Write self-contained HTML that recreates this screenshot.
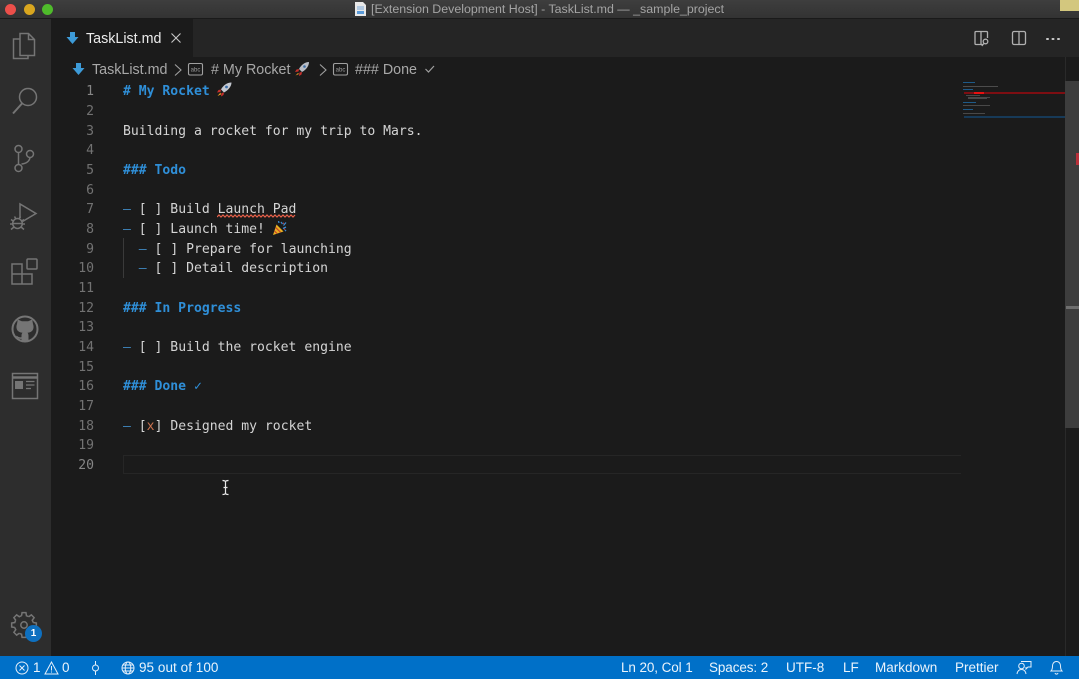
<!DOCTYPE html>
<html><head><meta charset="utf-8">
<style>
html,body{margin:0;padding:0;background:#1b1b1b;}
#r{position:relative;width:1079px;height:679px;overflow:hidden;background:#1b1b1b;font-family:"Liberation Sans",sans-serif;}
.a{position:absolute;}
.t{position:absolute;white-space:pre;}
.ln{position:absolute;width:30px;left:64px;text-align:right;font:13.1px/20px "DejaVu Sans Mono",monospace;color:#727272;}
.c{position:absolute;left:123px;white-space:pre;font:13.1px/20px "DejaVu Sans Mono",monospace;color:#d4d4d4;}
.h{color:#2f8fd8;font-weight:bold;}
.d{color:#3f86bd;}
.sb{position:absolute;top:660px;white-space:pre;font-size:13.5px;line-height:16px;color:#eaf3fb;}
.m{position:absolute;height:1px;}
</style></head><body>
<div id="r">
<!-- title bar -->
<div class="a" style="left:0;top:0;width:1079px;height:18px;background:linear-gradient(#3e3e3e,#333);border-bottom:1px solid #1a1a1a;"></div>
<div class="a" style="left:5px;top:4px;width:11px;height:11px;border-radius:50%;background:#ec4f4a;"></div>
<div class="a" style="left:23.5px;top:4px;width:11px;height:11px;border-radius:50%;background:#d9a61f;"></div>
<div class="a" style="left:42px;top:4px;width:11px;height:11px;border-radius:50%;background:#4fbb2b;"></div>
<svg class="a" style="left:354px;top:1px" width="13" height="16" viewBox="0 0 13 16"><path d="M1 1h8l3 3v11H1z" fill="#e8e8e8"/><path d="M3 6h7M3 8h7" stroke="#7aa7d8" stroke-width="1"/><path d="M3 10h7v3H3z" fill="#5a9ad8"/></svg>
<div class="t" style="left:371px;top:1px;font-size:12.4px;line-height:17px;color:#a4a4a4;">[Extension Development Host] - TaskList.md — _sample_project</div>
<div class="a" style="left:1060px;top:0;width:19px;height:11px;background:#d3c77e;"></div>

<!-- activity bar -->
<div class="a" style="left:0;top:19px;width:51px;height:637px;background:#2d2d2d;"></div>
<svg class="a" style="left:0;top:19px" width="51" height="637" viewBox="0 0 51 637" fill="none" stroke="#757575" stroke-width="1.500">
 <!-- files -->
 <path d="M20 14.500h8.500l6 6v16h-14.500z M28.500 14.500v6h6"/>
 <path d="M20 20h-6.500v19.500h14.500v-3.500"/>
 <!-- search -->
 <circle cx="28" cy="78" r="8.500"/><path d="M22 84.500l-9 10" stroke-width="2"/>
 <!-- scm -->
 <circle cx="18.500" cy="130" r="3.500"/><circle cx="18.500" cy="149" r="3.500"/><circle cx="30" cy="135" r="3.500"/>
 <path d="M18.500 133.500v12M21.500 145c5-.5 8-3 8.500-6.500"/>
 <!-- debug -->
 <path d="M20 199v-14l16 9.500-13.500 8"/>
 <ellipse cx="17.500" cy="204.500" rx="4.800" ry="5"/><path d="M12.700 204.500h9.600"/><path d="M11 200.500l3 2M24 200.500l-3 2M10 205h2.500M22.500 205h2.500M11 210.500l3-2.500M24 210.500l-3-2.500M14.500 197.500l1.500 2.500M20.500 197.500l-1.500 2.500"/>
 <!-- ext -->
 <path d="M12 245h10v10H12zM12 255h10v10H12zM22 255h10v10H22z"/><rect x="27" y="240" width="10" height="10" rx="1"/>
 <!-- github -->
 <circle cx="25" cy="310" r="12.500" stroke-width="2"/>
 <path d="M17 305l.8-4.500 4 1.800h6.400l4-1.800.8 4.500c1 2.500.6 5.500-1 7-1.500 1.300-3.500 1.700-4.500 1.800.7.700 1 1.700 1 3v5.700h-7v-2.700c-2.700.5-4.300-.5-5.500-3 1.700 0 2.300 2 5.500 1.500v-1.500c0-1.300.3-2.300 1-3-1 -.1-3-.5-4.500-1.800-1.600-1.500-2-4.500-1-7z" fill="#757575" stroke="none"/>
 <!-- preview -->
 <rect x="12.500" y="354.500" width="25" height="25"/><path d="M12.500 358.500h25" stroke-width="2.500"/>
 <rect x="15" y="362" width="8" height="8" fill="#757575" stroke="none"/>
 <path d="M26 362.500h8.500M26 366h8.500M26 369.500h5" stroke-width="1.300"/>
 <!-- gear -->
 <circle cx="24" cy="606" r="3.200"/>
 <g id="g">
 <path d="M33.180 603.540L36.350 604.040V607.960L33.180 608.460A9.500 9.500 0 0 1 32.230 610.750"/>
 <path transform="rotate(45 24 606)" d="M33.180 603.540L36.350 604.040V607.960L33.180 608.460A9.500 9.500 0 0 1 32.230 610.750"/>
 <path transform="rotate(90 24 606)" d="M33.180 603.540L36.350 604.040V607.960L33.180 608.460A9.500 9.500 0 0 1 32.230 610.750"/>
 <path transform="rotate(135 24 606)" d="M33.180 603.540L36.350 604.040V607.960L33.180 608.460A9.500 9.500 0 0 1 32.230 610.750"/>
 <path transform="rotate(180 24 606)" d="M33.180 603.540L36.350 604.040V607.960L33.180 608.460A9.500 9.500 0 0 1 32.230 610.750"/>
 <path transform="rotate(225 24 606)" d="M33.180 603.540L36.350 604.040V607.960L33.180 608.460A9.500 9.500 0 0 1 32.230 610.750"/>
 <path transform="rotate(270 24 606)" d="M33.180 603.540L36.350 604.040V607.960L33.180 608.460A9.500 9.500 0 0 1 32.230 610.750"/>
 <path transform="rotate(315 24 606)" d="M33.180 603.540L36.350 604.040V607.960L33.180 608.460A9.500 9.500 0 0 1 32.230 610.750"/>
 </g>
</svg>
<div class="a" style="left:25px;top:625px;width:17px;height:17px;border-radius:50%;background:#0e70c0;color:#fff;font-size:10px;font-weight:bold;line-height:17px;text-align:center;">1</div>

<!-- tab bar -->
<div class="a" style="left:51px;top:19px;width:1028px;height:38px;background:#252525;"></div>
<div class="a" style="left:51px;top:19px;width:142px;height:38px;background:#1b1b1b;"></div>
<svg class="a" style="left:66px;top:31px" width="13" height="15" viewBox="0 0 13 15"><path d="M4 1h5v5h3.500L6.500 13 .5 6H4z" fill="#3d9bd8"/></svg>
<div class="t" style="left:86px;top:30px;font-size:14.300px;line-height:18px;color:#ececec;">TaskList.md</div>
<svg class="a" style="left:170px;top:32px" width="12" height="12" viewBox="0 0 12 12"><path d="M1.500 1.500l9 9M10.500 1.500l-9 9" stroke="#c8c8c8" stroke-width="1.100" fill="none"/></svg>
<svg class="a" style="left:970px;top:26px" width="60" height="24" viewBox="0 0 60 24" fill="none" stroke="#b0b0b0" stroke-width="1.300">
 <path d="M17.500 12V6.500a1 1 0 0 0-1-1H6a1 1 0 0 0-1 1v11a1 1 0 0 0 1 1h7M11 5.500v13"/><circle cx="15.500" cy="15.500" r="2.300"/><path d="M13.800 17.500l-2 2.500"/>
 <rect x="42.500" y="5.500" width="13" height="13" rx="1.500"/><path d="M49 5.500v13"/>
</svg>
<div class="a" style="left:1046px;top:37.500px;width:2.500px;height:2.500px;border-radius:50%;background:#c8c8c8;box-shadow:5.500px 0 #c8c8c8,11px 0 #c8c8c8;"></div>

<!-- breadcrumbs -->
<svg class="a" style="left:72px;top:62px" width="13" height="15" viewBox="0 0 13 15"><path d="M4 1h5v5h3.500L6.500 13 .5 6H4z" fill="#3d9bd8"/></svg>
<div class="t" style="left:92px;top:61px;font-size:14.300px;line-height:18px;color:#a8a8a8;">TaskList.md</div>
<svg class="a" style="left:172px;top:61px" width="280" height="18" viewBox="0 0 280 18" fill="none" stroke="#a0a0a0" stroke-width="1.100">
 <path d="M3 3.500l6 5.500-6 5.500"/>
 <rect x="16.500" y="2.500" width="14" height="11.500" rx="1.500"/>
 <path d="M148 3.500l6 5.500-6 5.500"/>
 <rect x="161.500" y="2.500" width="14" height="11.500" rx="1.500"/>
 <path d="M253.500 8l3 3 5.500-6" stroke-width="1.200"/>
 <g font-family="Liberation Sans, sans-serif" font-size="6" fill="#a0a0a0" stroke="none" text-anchor="middle"><text x="23.500" y="10.500">abc</text><text x="168.500" y="10.500">abc</text></g>
</svg>
<div class="t" style="left:211px;top:61px;font-size:14.300px;line-height:18px;color:#a8a8a8;"># My Rocket</div>
<div class="t" style="left:355px;top:61px;font-size:14.300px;line-height:18px;color:#a8a8a8;">### Done</div>
<svg class="a" style="left:294px;top:61px" width="16" height="16" viewBox="0 0 16 16"><path d="M15 1c-4 0-8 3-10 7l3 3c4-2 7-6 7-10z" fill="#b8bcc4"/><circle cx="10.500" cy="5.500" r="1.300" fill="#3c6ea8"/><path d="M5 8L2.500 8.500 1 11l3.500-.5zM8 11l-.5 2.500L5 15l.5-3.500z" fill="#c9302c"/><path d="M4 12l-2.500 2.500L5 13z" fill="#f0a020"/></svg>

<!-- line numbers -->
<div class="ln" style="top:82px;color:#868686">1</div><div class="ln" style="top:102px">2</div><div class="ln" style="top:122px">3</div><div class="ln" style="top:141px">4</div><div class="ln" style="top:161px">5</div><div class="ln" style="top:181px">6</div><div class="ln" style="top:200px">7</div><div class="ln" style="top:220px">8</div><div class="ln" style="top:240px">9</div><div class="ln" style="top:259px">10</div><div class="ln" style="top:279px">11</div><div class="ln" style="top:299px">12</div><div class="ln" style="top:318px">13</div><div class="ln" style="top:338px">14</div><div class="ln" style="top:358px">15</div><div class="ln" style="top:377px">16</div><div class="ln" style="top:397px">17</div><div class="ln" style="top:417px">18</div><div class="ln" style="top:436px">19</div><div class="ln" style="top:456px;color:#868686">20</div>

<!-- code -->
<div class="c h" style="top:82px"># My Rocket</div>
<svg class="a" style="left:216px;top:82px" width="16" height="15" viewBox="0 0 16 15"><path d="M15.500 .5c-4.500 0-8.500 3-10.500 7l3 3c4-2 7.500-6 7.500-10z" fill="#c4c8d0"/><circle cx="10.500" cy="5" r="1.400" fill="#3c6ea8"/><path d="M5 7.500L2.500 8 1 10.500l3.500-.5zM8 10.500l-.5 2.500L5 14.500l.5-3.500z" fill="#c9302c"/><path d="M4.500 10.500L1.500 14l3.500-1.500z" fill="#f0a020"/></svg>
<div class="c" style="top:122px">Building a rocket for my trip to Mars.</div>
<div class="c h" style="top:161px">### Todo</div>
<div class="c" style="top:200px"><span class="d">–</span> [ ] Build Launch Pad</div>
<svg class="a" style="left:217px;top:214px" width="80" height="5" viewBox="0 0 80 5"><path d="M0 3l2-2 2 2 2-2 2 2 2-2 2 2 2-2 2 2 2-2 2 2 2-2 2 2 2-2 2 2 2-2 2 2 2-2 2 2 2-2 2 2 2-2 2 2 2-2 2 2 2-2 2 2 2-2 2 2 2-2 2 2 2-2 2 2 2-2 2 2 2-2 2 2 2-2 2 2 2-2" stroke="#e8614a" stroke-width="1.200" fill="none"/></svg>
<div class="c" style="top:220px"><span class="d">–</span> [ ] Launch time!</div>
<svg class="a" style="left:273px;top:221px" width="14" height="14" viewBox="0 0 14 14"><path d="M0 14L3.500 3.500l7 7z" fill="#e8b020"/><path d="M1.500 10l2.500 2.500M2.700 6.500l4.800 4.800" stroke="#c9402c" stroke-width="1.200"/><path d="M8 1l1.500 2M13 1.500l-2.500 3M13 6l-3 1.500M13 10l-1-1M5.500 0l.5 2" stroke="#3c8ad0" stroke-width="1.300"/><path d="M10 2l1 .5M11 8l1 .5" stroke="#d8403c" stroke-width="1.200"/></svg>
<div class="a" style="left:123px;top:238px;width:1px;height:40px;background:#3a3a3a;"></div>
<div class="c" style="top:240px">  <span class="d">–</span> [ ] Prepare for launching</div>
<div class="c" style="top:259px">  <span class="d">–</span> [ ] Detail description</div>
<div class="c h" style="top:299px">### In Progress</div>
<div class="c" style="top:338px"><span class="d">–</span> [ ] Build the rocket engine</div>
<div class="c h" style="top:377px">### Done ✓</div>
<div class="c" style="top:417px"><span class="d">–</span> [<span style="color:#c8714f">x</span>] Designed my rocket</div>

<!-- current line -->
<div class="a" style="left:123px;top:455px;width:837px;height:17px;border:1px solid #262626;border-right:0;"></div>
<!-- text cursor -->
<svg class="a" style="left:220px;top:479px" width="11" height="17" viewBox="0 0 11 17"><path d="M2.500 1.500c2 0 3 .5 3 1.500 0-1 1-1.500 3-1.500M5.500 3v11M3.500 8.500h4M2.500 15.500c2 0 3-.5 3-1.500 0 1 1 1.500 3 1.500" stroke="#e8e8e8" stroke-width="1.200" fill="none"/></svg>

<!-- minimap -->
<div class="m" style="left:963px;top:82px;width:12px;background:#1e5a88"></div>
<div class="m" style="left:963px;top:86px;width:35px;background:#4c4c4c"></div>
<div class="m" style="left:963px;top:89px;width:10px;background:#1e5a88"></div>
<div class="a" style="left:964px;top:92px;width:101px;height:2px;background:#7d0e12"></div>
<div class="a" style="left:974px;top:92px;width:10px;height:2px;background:#e81010"></div>
<div class="m" style="left:966px;top:95px;width:14px;background:#484848"></div>
<div class="m" style="left:968px;top:96.500px;width:22px;background:#484848"></div>
<div class="m" style="left:968px;top:98px;width:19px;background:#484848"></div>
<div class="m" style="left:963px;top:102px;width:13px;background:#1e5a88"></div>
<div class="m" style="left:963px;top:105px;width:27px;background:#484848"></div>
<div class="m" style="left:963px;top:109px;width:10px;background:#1e5a88"></div>
<div class="m" style="left:963px;top:113px;width:22px;background:#484848"></div>
<div class="a" style="left:964px;top:116px;width:101px;height:2px;background:#173a58"></div>

<!-- scrollbar -->
<div class="a" style="left:1065px;top:57px;width:1px;height:599px;background:#2a2a2a;"></div>
<div class="a" style="left:1065px;top:81px;width:14px;height:347px;background:#3d3d3d;"></div>
<div class="a" style="left:1066px;top:306px;width:13px;height:3px;background:#6e6e6e;"></div>
<div class="a" style="left:1076px;top:153px;width:3px;height:12px;background:#b8303a;"></div>

<!-- status bar -->
<div class="a" style="left:0;top:656px;width:1079px;height:23px;background:#0070c8;"></div>
<svg class="a" style="left:0;top:656px" width="200" height="23" viewBox="0 0 200 23" fill="none" stroke="#e4effa" stroke-width="1">
 <circle cx="22" cy="12" r="6"/><path d="M19.500 9.500l5 5M24.500 9.500l-5 5"/>
 <path d="M51.500 6L45 18h13z"/><path d="M51.500 10v4.500M51.500 15.500v1"/>
 <circle cx="95.500" cy="12" r="3"/><path d="M95.500 5v4M95.500 15v4"/>
 <circle cx="128" cy="12" r="6"/><ellipse cx="128" cy="12" rx="2.800" ry="6"/><path d="M122 12h12M123 9h10M123 15h10"/>
</svg>
<div class="sb" style="left:33px">1</div>
<div class="sb" style="left:62px">0</div>
<div class="sb" style="left:139px;letter-spacing:.05px">95 out of 100</div>
<div class="sb" style="left:621px;letter-spacing:-.1px">Ln 20, Col 1</div>
<div class="sb" style="left:709px;letter-spacing:-.1px">Spaces: 2</div>
<div class="sb" style="left:786px">UTF-8</div>
<div class="sb" style="left:843px">LF</div>
<div class="sb" style="left:875px">Markdown</div>
<div class="sb" style="left:955px">Prettier</div>
<svg class="a" style="left:1015px;top:658px" width="55" height="19" viewBox="0 0 55 19" fill="none" stroke="#e4effa" stroke-width="1">
 <circle cx="6.500" cy="8" r="2.800"/><path d="M2 16c.5-3 2-4.500 4.500-4.500S10.500 13 11 16M6 3.500h10V9h-3l-2 2V9"/>
 <path d="M36 13c1.500-1.500 1.500-3 1.500-5 0-2.500 1.500-4.500 4-4.500s4 2 4 4.500c0 2 0 3.500 1.500 5zM40 15c.5 1.500 2.500 1.500 3 0"/>
</svg>
</div>
</body></html>
